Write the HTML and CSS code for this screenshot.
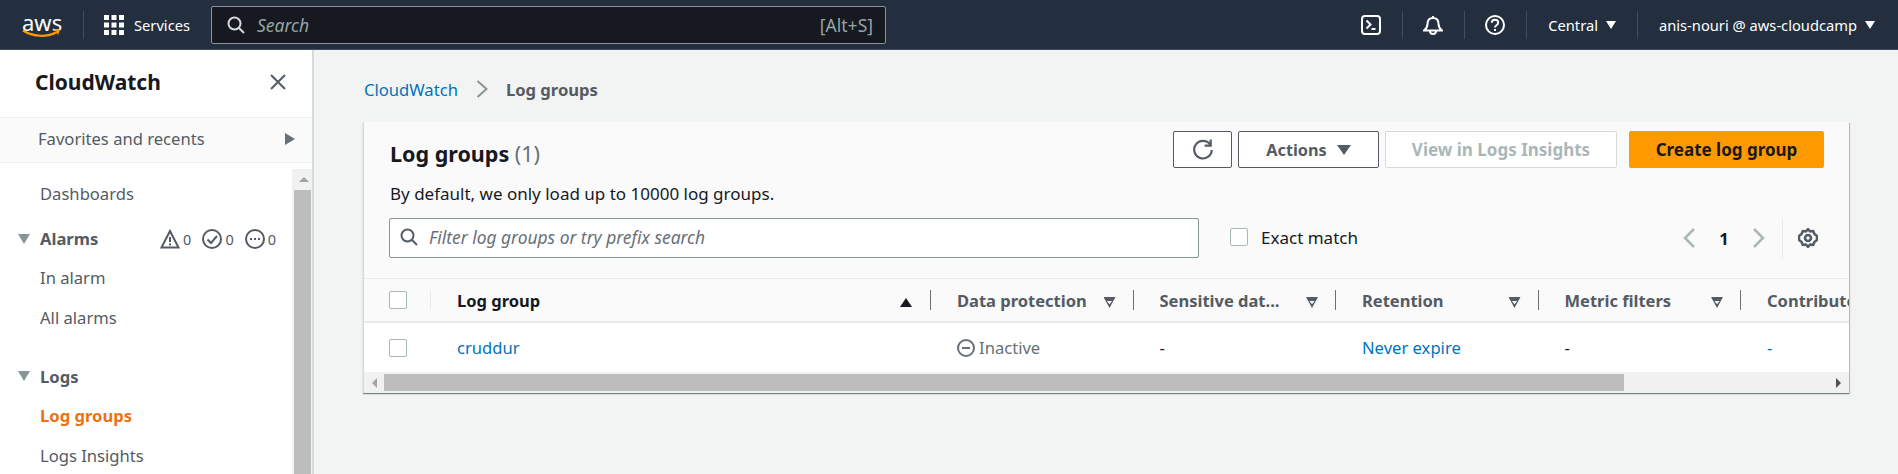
FILE: index.html
```html
<!DOCTYPE html>
<html lang="en">
<head>
  <meta charset="UTF-8" />
  <title>Log groups | CloudWatch</title>
  <link rel="stylesheet" href="styles.css">
</head>
<body>
  <header class="topbar">
    <div class="logo">
      <span class="logo-text">aws</span>
      <svg class="logo-smile" viewBox="0 0 40 10" width="40" height="10"><path d="M1 1.5c10 6.5 24 7 34 1.5" fill="none" stroke="#f90" stroke-width="2.2"/><path d="M31 .8l7-.6-2 6.4-1.2-3.8z" fill="#f90"/></svg>
    </div>
    <span class="top-sep"></span>
    <svg class="grid-icon" viewBox="0 0 20 20" width="20" height="20" fill="#fff">
      <rect x="0" y="0" width="5" height="5"/><rect x="7.5" y="0" width="5" height="5"/><rect x="15" y="0" width="5" height="5"/>
      <rect x="0" y="7.5" width="5" height="5"/><rect x="7.5" y="7.5" width="5" height="5"/><rect x="15" y="7.5" width="5" height="5"/>
      <rect x="0" y="15" width="5" height="5"/><rect x="7.5" y="15" width="5" height="5"/><rect x="15" y="15" width="5" height="5"/>
    </svg>
    <span class="services">Services</span>
    <div class="search">
      <svg viewBox="0 0 18 18" width="18" height="18" fill="none" stroke="#d5dbdb" stroke-width="2"><circle cx="7.5" cy="7.5" r="6"/><path d="M12 12l5 5"/></svg>
      <span class="search-text">Search</span>
      <span class="search-key">[Alt+S]</span>
    </div>
    <div class="top-right">
      <div class="tool">
        <svg viewBox="0 0 20 20" width="20" height="20" fill="none" stroke="#fff" stroke-width="2"><rect x="1" y="1" width="18" height="18" rx="3"/><path d="M5.500 5.500l4 4-4 4M10.500 14h4"/></svg>
      </div>
      <div class="tool">
        <svg viewBox="0 0 20 20" width="20" height="20" fill="none" stroke="#fff" stroke-width="2"><path d="M1 15.500c2.500-2 3.500-3.500 3.500-6.500 0-3.500 2-6 5.500-6s5.500 2.500 5.500 6c0 3 1 4.500 3.500 6.500z"/><path d="M10 1v2M7 16c0 4 6 4 6 0"/></svg>
      </div>
      <div class="tool">
        <svg viewBox="0 0 20 20" width="20" height="20" fill="none" stroke="#fff" stroke-width="2"><circle cx="10" cy="10" r="9"/><path d="M6.800 7.800c0-4.200 6.400-4.200 6.400 0 0 2.500-3.200 2.400-3.200 4.700"/><path d="M10 14v2"/></svg>
      </div>
      <div class="menu region">Central <span class="caret"></span></div>
      <div class="menu account">anis-nouri @ aws-cloudcamp <span class="caret"></span></div>
    </div>
  </header>

  <div class="page">
    <aside class="sidebar">
      <div class="side-head">
        <span class="side-title">CloudWatch</span>
        <svg viewBox="0 0 16 16" width="16" height="16" fill="none" stroke="#545b64" stroke-width="2"><path d="M1 1l14 14M15 1L1 15"/></svg>
      </div>
      <div class="favorites">
        <span>Favorites and recents</span>
        <span class="fav-arrow"></span>
      </div>
      <div class="side-body">
        <nav class="nav">
          <a class="nav-link nav-first">Dashboards</a>
          <div class="nav-group nav-alarms">
            <span class="group-arrow"></span>
            <strong>Alarms</strong>
            <div class="alarm-counts">
              <svg viewBox="0 0 20 20" width="20" height="20" fill="none" stroke="#545b64" stroke-width="2"><path d="M10 2L1.500 18.500h17z"/><path d="M10 8v5M10 14.500v2"/></svg><span>0</span>
              <svg viewBox="0 0 20 20" width="20" height="20" fill="none" stroke="#545b64" stroke-width="2"><circle cx="10" cy="10" r="9"/><path d="M5.500 10.500l3.500 3.500 6-7"/></svg><span>0</span>
              <svg viewBox="0 0 20 20" width="20" height="20" fill="none" stroke="#545b64" stroke-width="2"><circle cx="10" cy="10" r="9"/><path d="M5 10h2M9 10h2M13 10h2"/></svg><span>0</span>
            </div>
          </div>
          <a class="nav-link">In alarm</a>
          <a class="nav-link">All alarms</a>
          <div class="nav-group nav-group-gap">
            <span class="group-arrow"></span>
            <strong>Logs</strong>
          </div>
          <a class="nav-link nav-active">Log groups</a>
          <a class="nav-link">Logs Insights</a>
        </nav>
        <div class="side-scroll">
          <span class="side-scroll-up"></span>
          <span class="side-scroll-thumb"></span>
        </div>
      </div>
    </aside>

    <main class="content">
      <div class="crumbs">
        <a class="link">CloudWatch</a>
        <svg viewBox="0 0 12 18" width="12" height="18" fill="none" stroke="#879596" stroke-width="2"><path d="M1.500 1l9 8-9 8"/></svg>
        <strong>Log groups</strong>
      </div>

      <section class="card">
        <div class="card-head">
          <div class="head-top">
            <div class="head-text">
              <h1>Log groups <span class="count">(1)</span></h1>
              <p class="note">By default, we only load up to 10000 log groups.</p>
            </div>
            <div class="actions">
              <button class="btn btn-icon">
                <svg viewBox="0 0 20 20" width="22" height="22" fill="none" stroke="#545b64" stroke-width="2"><path d="M16.500 5A8 8 0 1 0 18 10"/><path d="M17 0.500V6h-5.500"/></svg>
              </button>
              <button class="btn btn-actions">Actions <span class="caret caret-dark"></span></button>
              <button class="btn btn-off">View in Logs Insights</button>
              <button class="btn btn-primary">Create log group</button>
            </div>
          </div>
          <div class="filter-row">
            <div class="filter">
              <svg viewBox="0 0 18 18" width="18" height="18" fill="none" stroke="#545b64" stroke-width="2"><circle cx="7.500" cy="7.500" r="6"/><path d="M12 12l5 5"/></svg>
              <span>Filter log groups or try prefix search</span>
            </div>
            <label class="exact"><span class="check"></span>Exact match</label>
            <div class="pager">
              <svg viewBox="0 0 12 20" width="12" height="20" fill="none" stroke="#aab7b8" stroke-width="2.500"><path d="M11 1L2 10l9 9"/></svg>
              <span class="page-num">1</span>
              <svg viewBox="0 0 12 20" width="12" height="20" fill="none" stroke="#aab7b8" stroke-width="2.500"><path d="M1 1l9 9-9 9"/></svg>
              <span class="pager-sep"></span>
              <svg viewBox="0 0 20 20" width="20" height="20" fill="none" stroke="#545b64" stroke-width="2.500"><path d="M10 1l2 2.500 3.200-.5 1.200 3 2.600 2v4l-2.600 2-1.200 3-3.200-.5L10 19l-2-2.500-3.200.5-1.200-3L1 12V8l2.600-2 1.200-3 3.200.5z" stroke-linejoin="round"/><circle cx="10" cy="10" r="3"/></svg>
            </div>
          </div>
        </div>

        <div class="table">
          <div class="thead">
            <div class="cell cell-check cell-faint"><span class="check"></span></div>
            <div class="cell th sorted">Log group <span class="sort-on"></span></div>
            <div class="cell th">Data protection <span class="sort"></span></div>
            <div class="cell th"><span class="clip">Sensitive dat...</span> <span class="sort"></span></div>
            <div class="cell th">Retention <span class="sort"></span></div>
            <div class="cell th">Metric filters <span class="sort"></span></div>
            <div class="cell th">Contributor Insights <span class="sort"></span></div>
          </div>
          <div class="trow">
            <div class="cell cell-check"><span class="check"></span></div>
            <div class="cell"><a class="link">cruddur</a></div>
            <div class="cell status">
              <svg viewBox="0 0 18 18" width="18" height="18" fill="none" stroke="#687078" stroke-width="2"><circle cx="9" cy="9" r="8"/><path d="M5 9h8"/></svg>
              <span>Inactive</span>
            </div>
            <div class="cell">-</div>
            <div class="cell"><a class="link">Never expire</a></div>
            <div class="cell">-</div>
            <div class="cell"><a class="link">-</a></div>
          </div>
        </div>

        <div class="hscroll">
          <span class="hscroll-left"></span>
          <span class="hscroll-thumb"></span>
          <span class="hscroll-right"></span>
        </div>
      </section>
    </main>
  </div>
</body>
</html>
```

FILE: styles.css
```css
* {
  box-sizing: border-box;
}
html, body {
  margin: 0;
  height: 474px;
  overflow: hidden;
}
body {
  font-family: "Noto Sans", "Open Sans", sans-serif;
  font-size: 16.6px;
  color: #16191f;
  background: #f2f3f3;
}
.link {
  color: #0073bb;
}

/* top bar */
.topbar {
  display: flex;
  align-items: center;
  height: 50px;
  padding-left: 22px;
  background: #232f3e;
  border-bottom: 1px solid #414d5c;
  color: #fff;
  font-size: 14.7px;
}
.logo {
  position: relative;
  width: 40px;
  height: 28px;
}
.logo-text {
  display: block;
  font-size: 22px;
  line-height: 22px;
  text-align: center;
}
.logo-smile {
  position: absolute;
  left: 0;
  bottom: 0;
}
.top-sep {
  width: 1px;
  height: 28px;
  margin: 0 20px 0 21px;
  background: #414d5c;
}
.services {
  margin-left: 10px;
  width: 77px;
}
.search {
  display: flex;
  align-items: center;
  width: 675px;
  height: 38px;
  padding: 0 12px 0 15px;
  background: #16191f;
  border: 1px solid #879596;
  border-radius: 2px;
  color: #95a5a6;
  font-size: 17.5px;
}
.search-text {
  margin-left: 12px;
  font-style: italic;
}
.search-key {
  margin-left: auto;
}
.top-right {
  display: flex;
  align-items: center;
  margin-left: auto;
  padding-right: 23px;
}
.tool {
  display: flex;
  align-items: center;
  height: 28px;
  padding: 0 21px 0 20px;
  border-right: 1px solid #414d5c;
}
.menu {
  display: flex;
  align-items: center;
  gap: 8px;
  height: 28px;
}
.region {
  padding: 0 21px;
  border-right: 1px solid #414d5c;
}
.account {
  padding-left: 21px;
}
.caret {
  width: 0;
  height: 0;
  border-left: 5px solid transparent;
  border-right: 5px solid transparent;
  border-top: 8px solid #fff;
}
.caret-dark {
  display: inline-block;
  margin-left: 10px;
  border-left-width: 7px;
  border-right-width: 7px;
  border-top: 10px solid #545b64;
}

.page {
  display: flex;
  height: 424px;
}

/* left nav */
.sidebar {
  display: flex;
  flex-direction: column;
  flex: none;
  width: 314px;
  background: #fff;
  border-right: 2px solid #d5dbdb;
}
.side-head {
  display: flex;
  align-items: center;
  justify-content: space-between;
  flex: none;
  height: 67px;
  padding: 0 26px 4px 35px;
}
.side-title {
  font-size: 21px;
  font-weight: 700;
}
.favorites {
  display: flex;
  align-items: center;
  justify-content: space-between;
  flex: none;
  height: 46px;
  padding: 0 17px 3px 38px;
  background: #fafafa;
  border-top: 1px solid #eaeded;
  border-bottom: 1px solid #eaeded;
  color: #545b64;
}
.fav-arrow {
  width: 0;
  height: 0;
  border-top: 6px solid transparent;
  border-bottom: 6px solid transparent;
  border-left: 10px solid #687078;
}
.side-body {
  display: flex;
  flex: 1;
  min-height: 0;
  padding-top: 6px;
}
.nav {
  flex: 1;
  color: #545b64;
  overflow: hidden;
}
.nav-link {
  display: block;
  height: 40px;
  line-height: 40px;
  padding-left: 40px;
}
.nav-first {
  margin-top: 5px;
}
.nav-active {
  color: #ec7211;
  font-weight: 700;
}
.nav-group {
  display: flex;
  align-items: center;
  height: 40px;
  padding-left: 18px;
  margin-top: 5px;
}
.nav-alarms {
  height: 39px;
}
.nav-group-gap {
  margin-top: 18px;
}
.nav-group strong {
  margin-left: 10px;
}
.group-arrow {
  width: 0;
  height: 0;
  border-left: 6px solid transparent;
  border-right: 6px solid transparent;
  border-top: 10px solid #879596;
}
.alarm-counts {
  display: flex;
  align-items: center;
  margin-left: auto;
  margin-right: 16px;
  font-size: 14.5px;
}
.alarm-counts span {
  margin: 0 11px 0 3px;
}
.alarm-counts span:last-child {
  margin-right: 0;
}
.side-scroll {
  position: relative;
  flex: none;
  width: 20px;
  background: #f1f1f1;
  padding-left: 2px;
}
.side-scroll-up {
  display: block;
  width: 0;
  height: 0;
  margin: 8px 0 0 5px;
  border-left: 5px solid transparent;
  border-right: 5px solid transparent;
  border-bottom: 5px solid #a3a3a3;
}
.side-scroll-thumb {
  display: block;
  height: 300px;
  width: 17px;
  margin-top: 8px;
  background: #bdbdbd;
}

/* main area */
.content {
  flex: 1;
  min-width: 0;
  padding: 0 49px 0 49px;
}
.crumbs {
  display: flex;
  align-items: center;
  height: 72px;
  padding: 6px 0 0 1px;
  gap: 18px;
}
.crumbs strong {
  color: #545b64;
}
.card {
  background: #fafafa;
  border-left: 1px solid #d5dbdb;
  box-shadow: 0 1px 1px 0 rgba(0, 28, 36, 0.4), 1px 1px 1px 0 rgba(0, 28, 36, 0.2);
}
.card-head {
  padding: 9px 25px 0 25px;
}
.head-top {
  display: flex;
  justify-content: space-between;
}
.head-text {
  padding-left: 1px;
}
h1 {
  margin: 0;
  padding-top: 8px;
  font-size: 21.5px;
  line-height: 30px;
  font-weight: 700;
}
.count {
  color: #687078;
  font-weight: 400;
}
.note {
  margin: 14px 0 0;
  line-height: 22px;
  font-size: 17px;
}
.actions {
  display: flex;
  height: 37px;
}
.btn {
  display: flex;
  align-items: center;
  justify-content: center;
  height: 37px;
  margin-left: 6px;
  border: 1px solid #545b64;
  border-radius: 2px;
  background: #fff;
  color: #545b64;
  font-family: inherit;
  font-size: 16.3px;
  font-weight: 700;
}
.btn-icon {
  width: 59px;
  margin-left: 0;
}
.btn-actions {
  width: 141px;
}
.btn-off {
  width: 232px;
  border-color: #d5dbdb;
  color: #aab7b8;
  font-size: 17px;
}
.btn-primary {
  width: 195px;
  margin-left: 12px;
  border-color: #f90;
  background: #f90;
  color: #16191f;
  font-size: 17px;
}
.filter-row {
  display: flex;
  align-items: center;
  margin-top: 13px;
  height: 40px;
}
.filter {
  display: flex;
  align-items: center;
  gap: 11px;
  width: 810px;
  height: 40px;
  padding: 0 0 2px 10px;
  background: #fff;
  border: 1px solid #879596;
  border-radius: 2px;
  color: #687078;
  font-size: 17.4px;
  font-style: italic;
}
.check {
  display: block;
  flex: none;
  width: 18px;
  height: 18px;
  background: #fff;
  border: 1px solid #aab7b8;
  border-radius: 2px;
}
.exact {
  display: flex;
  align-items: center;
  gap: 13px;
  margin-left: 31px;
  padding-bottom: 2px;
  font-size: 17px;
}
.pager {
  display: flex;
  align-items: center;
  margin-left: auto;
  height: 40px;
  padding-right: 6px;
}
.page-num {
  width: 58px;
  text-align: center;
  font-weight: 700;
}
.pager-sep {
  width: 1px;
  height: 40px;
  margin: 0 15px 0 17px;
  background: #eaeded;
}

/* table */
.table {
  margin-top: 20px;
  overflow: hidden;
}
.thead, .trow {
  display: grid;
  grid-template-columns: 67px 500px repeat(5, 202.5px);
}
.thead {
  height: 45px;
  border-top: 1px solid #eaeded;
  border-bottom: 2px solid #eaeded;
  color: #545b64;
  font-weight: 700;
  font-size: 16.5px;
}
.trow {
  height: 49px;
  background: #fff;
}
.cell {
  display: flex;
  align-items: center;
  padding-left: 26px;
  white-space: nowrap;
  min-width: 0;
}
.cell-check {
  padding-left: 25px;
}
.th {
  position: relative;
  justify-content: space-between;
  padding-right: 18px;
}
.th::after {
  content: "";
  position: absolute;
  right: 0;
  top: 11px;
  bottom: 11px;
  width: 1px;
  background: #687078;
}
.cell-faint {
  position: relative;
}
.cell-faint::after {
  content: "";
  position: absolute;
  right: 0;
  top: 11px;
  bottom: 11px;
  width: 1px;
  background: #eaeded;
}
.sorted {
  color: #16191f;
  padding-right: 19px;
}
.sort {
  flex: none;
  width: 12px;
  height: 11px;
  margin-top: 5px;
  background: #545b64;
  clip-path: polygon(0 0, 100% 0, 50% 100%, 0 0, 28% 36%, 50% 66%, 72% 36%, 28% 36%, 0 0);
}
.sort-on {
  flex: none;
  width: 12px;
  height: 9px;
  margin-top: 5px;
  background: #16191f;
  clip-path: polygon(50% 0, 100% 100%, 0 100%);
}
.status {
  gap: 4px;
  color: #687078;
}

/* horizontal scrollbar */
.hscroll {
  display: flex;
  align-items: center;
  height: 21px;
  background: #f1f1f1;
  padding: 0 8px;
}
.hscroll-left, .hscroll-right {
  flex: none;
  width: 0;
  height: 0;
  border-top: 5px solid transparent;
  border-bottom: 5px solid transparent;
}
.hscroll-left {
  border-right: 5px solid #a3a3a3;
}
.hscroll-right {
  margin-left: auto;
  border-left: 5px solid #505050;
}
.hscroll-thumb {
  width: 1240px;
  height: 17px;
  margin-left: 7px;
  background: #bdbdbd;
}
```
